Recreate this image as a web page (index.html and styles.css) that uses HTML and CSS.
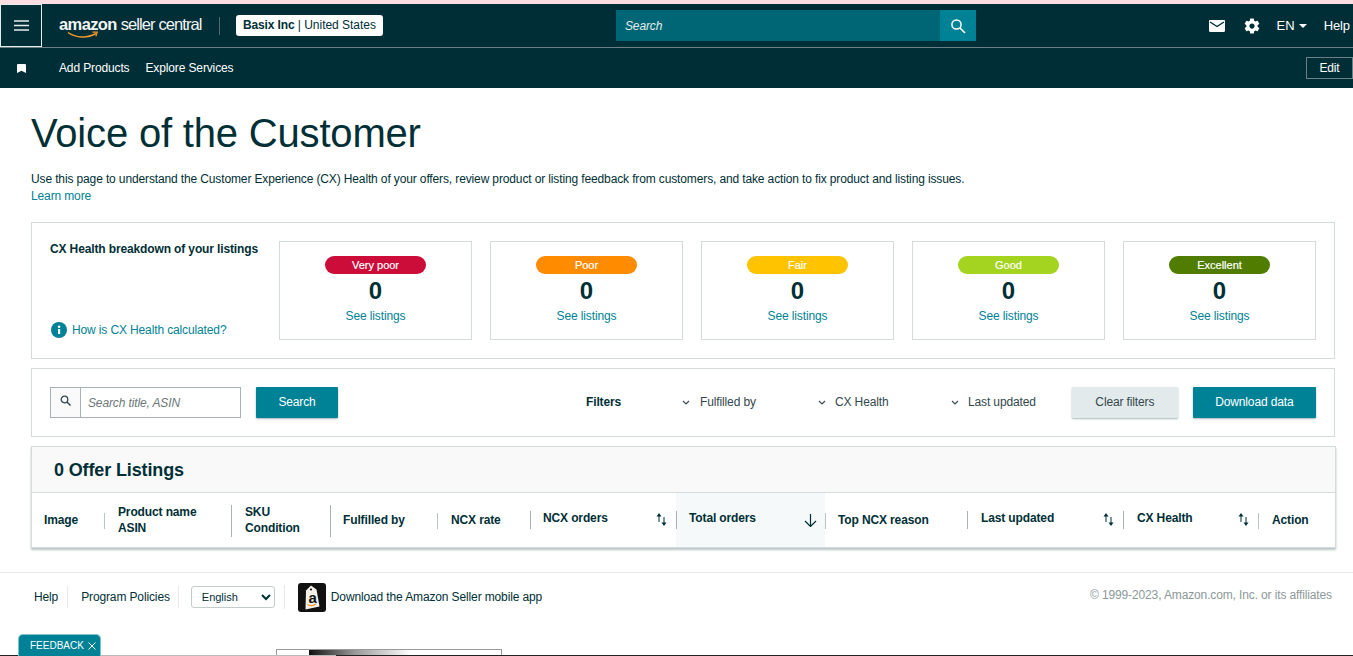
FILE: index.html
```html
<!DOCTYPE html>
<html lang="en">
<head>
<meta charset="utf-8">
<title>Voice of the Customer</title>
<link rel="stylesheet" href="styles.css">
</head>
<body>
<div class="strip"></div>
<header class="nav">
  <div class="nav-top">
    <button class="burger" aria-label="Menu">
      <svg width="15" height="11" viewBox="0 0 15 11"><path d="M0 1h15M0 5.500h15M0 10h15" stroke="#e8eeee" stroke-width="1.600" fill="none"/></svg>
    </button>
    <div class="logo">
      <span class="logo-words"><b>amazon</b> <span class="logo-light">seller central</span></span>
      <svg class="smile" width="32" height="8" viewBox="0 0 32 8"><path d="M1 1.500C9 7 20 7.500 29 2.500" stroke="#f3982a" stroke-width="1.500" fill="none"/><path d="M25.500 1.200l4.800 0-1.400 4" stroke="#f3982a" stroke-width="1.200" fill="none"/></svg>
    </div>
    <span class="logo-sep"></span>
    <div class="account"><b>Basix Inc</b> | United States</div>
    <div class="nav-search">
      <span class="nav-search-text">Search</span>
      <span class="nav-search-btn">
        <svg width="16" height="16" viewBox="0 0 16 16"><circle cx="6.500" cy="6.500" r="4.600" stroke="#fff" stroke-width="1.500" fill="none"/><path d="M10 10l5 5" stroke="#fff" stroke-width="1.700"/></svg>
      </span>
    </div>
    <div class="nav-right">
      <svg class="mail" width="16" height="12" viewBox="0 0 16 12"><path d="M1.200 0h13.600c.7 0 1.200.5 1.200 1.200v9.600c0 .7-.5 1.200-1.200 1.200H1.200C.5 12 0 11.500 0 10.800V1.200C0 .5.500 0 1.200 0z" fill="#fff"/><path d="M1 2l7 4.500L15 2" stroke="#002e36" stroke-width="1.400" fill="none"/></svg>
      <svg class="gear" width="18" height="18" viewBox="0 0 24 24"><path fill="#fff" d="M19.400 13c.04-.33.100-.66.100-1s-.06-.67-.1-1l2.100-1.650c.2-.15.240-.42.120-.64l-2-3.460c-.12-.22-.39-.3-.61-.22l-2.490 1c-.52-.4-1.080-.73-1.690-.98l-.38-2.650A.49.490 0 0 0 14 2h-4c-.25 0-.46.180-.49.420l-.38 2.650c-.61.250-1.170.59-1.690.98l-2.490-1c-.23-.09-.49 0-.61.220l-2 3.460c-.13.220-.07.490.120.640L4.570 11c-.4.330-.7.670-.07 1s.03.670.07 1l-2.110 1.650c-.19.150-.25.420-.12.640l2 3.460c.12.220.39.300.61.220l2.490-1c.52.400 1.080.730 1.690.980l.38 2.650c.03.240.24.420.49.420h4c.25 0 .46-.18.490-.42l.38-2.650c.61-.25 1.170-.59 1.690-.98l2.490 1c.23.090.49 0 .61-.22l2-3.460c.12-.22.070-.49-.12-.64L19.400 13zM12 15.500c-1.930 0-3.500-1.570-3.500-3.500s1.570-3.500 3.500-3.500 3.500 1.570 3.500 3.500-1.570 3.500-3.500 3.500z"/></svg>
      <span class="lang">EN<i class="caret"></i></span>
      <span class="nav-help">Help</span>
    </div>
  </div>
  <div class="nav-bottom">
    <svg class="bookmark" width="9" height="9" viewBox="0 0 9 9"><path d="M0 1a1 1 0 0 1 1-1h7a1 1 0 0 1 1 1v8L4.500 6.800 0 9z" fill="#fff"/></svg>
    <a class="nav-link">Add Products</a>
    <a class="nav-link">Explore Services</a>
    <button class="edit">Edit</button>
  </div>
</header>

<main class="main">
  <h1 class="title">Voice of the Customer</h1>
  <p class="intro">Use this page to understand the Customer Experience (CX) Health of your offers, review product or listing feedback from customers, and take action to fix product and listing issues.</p>
  <a class="learn">Learn more</a>

  <section class="panel health">
    <div class="health-info">
      <div class="health-title">CX Health breakdown of your listings</div>
      <div class="calc">
        <svg width="16" height="16" viewBox="0 0 16 16"><circle cx="8" cy="8" r="8" fill="#008296"/><rect x="7" y="7" width="2.200" height="5" fill="#fff"/><circle cx="8.100" cy="4.700" r="1.300" fill="#fff"/></svg>
        <a>How is CX Health calculated?</a>
      </div>
    </div>
    <div class="health-cards">
      <div class="card"><span class="pill very-poor">Very poor</span><span class="count">0</span><a class="see">See listings</a></div>
      <div class="card"><span class="pill poor">Poor</span><span class="count">0</span><a class="see">See listings</a></div>
      <div class="card"><span class="pill fair">Fair</span><span class="count">0</span><a class="see">See listings</a></div>
      <div class="card"><span class="pill good">Good</span><span class="count">0</span><a class="see">See listings</a></div>
      <div class="card"><span class="pill excellent">Excellent</span><span class="count">0</span><a class="see">See listings</a></div>
    </div>
  </section>

  <section class="panel toolbar">
    <div class="search-box">
      <span class="search-icon"><svg width="11" height="11" viewBox="0 0 11 11"><circle cx="4.500" cy="4.500" r="3.300" stroke="#33484d" stroke-width="1.300" fill="none"/><path d="M7 7l3.500 3.500" stroke="#33484d" stroke-width="1.500"/></svg></span>
      <span class="search-ph">Search title, ASIN</span>
    </div>
    <button class="btn primary search-btn">Search</button>
    <span class="filters-label">Filters</span>
    <span class="filter f1"><svg class="chev" width="8" height="5" viewBox="0 0 8 5"><path d="M1 1l3 3 3-3" stroke="#33484d" stroke-width="1.100" fill="none"/></svg>Fulfilled by</span>
    <span class="filter f2"><svg class="chev" width="8" height="5" viewBox="0 0 8 5"><path d="M1 1l3 3 3-3" stroke="#33484d" stroke-width="1.100" fill="none"/></svg>CX Health</span>
    <span class="filter f3"><svg class="chev" width="8" height="5" viewBox="0 0 8 5"><path d="M1 1l3 3 3-3" stroke="#33484d" stroke-width="1.100" fill="none"/></svg>Last updated</span>
    <button class="btn secondary">Clear filters</button>
    <button class="btn primary download">Download data</button>
  </section>

  <section class="listings">
    <h2 class="listings-head">0 Offer Listings</h2>
    <div class="thead">
      <div class="th c-image"><span>Image</span></div>
      <div class="th c-name sep"><span>Product name<br>ASIN</span></div>
      <div class="th c-sku sep tall"><span>SKU<br>Condition</span></div>
      <div class="th c-ful sep tall"><span>Fulfilled by</span></div>
      <div class="th c-rate sep"><span>NCX rate</span></div>
      <div class="th c-orders sep raised"><span>NCX orders</span><svg class="sort" width="11" height="13" viewBox="0 0 11 13"><path d="M3 0L.5 3.500h5zM8 13l-2.500-3.500h5z" fill="#002f36"/><path d="M3 3v6M8 4v6" stroke="#002f36" stroke-width="1"/></svg></div>
      <div class="th c-total sep raised active"><span>Total orders</span><svg class="down" width="13" height="13" viewBox="0 0 13 13"><path d="M6.500 0v12M1 7l5.500 5.500L12 7" stroke="#002f36" stroke-width="1.200" fill="none"/></svg></div>
      <div class="th c-top sep"><span>Top NCX reason</span></div>
      <div class="th c-last sep raised"><span>Last updated</span><svg class="sort" width="11" height="13" viewBox="0 0 11 13"><path d="M3 0L.5 3.500h5zM8 13l-2.500-3.500h5z" fill="#002f36"/><path d="M3 3v6M8 4v6" stroke="#002f36" stroke-width="1"/></svg></div>
      <div class="th c-cx sep raised"><span>CX Health</span><svg class="sort" width="11" height="13" viewBox="0 0 11 13"><path d="M3 0L.5 3.500h5zM8 13l-2.500-3.500h5z" fill="#002f36"/><path d="M3 3v6M8 4v6" stroke="#002f36" stroke-width="1"/></svg></div>
      <div class="th c-action sep"><span>Action</span></div>
    </div>
  </section>
</main>

<footer class="footer">
  <a class="foot-link">Help</a>
  <a class="foot-link">Program Policies</a>
  <div class="foot-select"><select class="lang-select"><option>English</option></select></div>
  <svg class="app-icon" width="28" height="29" viewBox="0 0 28 29"><rect width="28" height="29" rx="3" fill="#111"/><path d="M8 7.500l5-5 5.500 4 3 17-14 3z" fill="#f4f1ea"/><circle cx="13" cy="6.500" r="1.100" fill="#111"/><text x="14.500" y="19.500" text-anchor="middle" class="app-a">a</text><path d="M9.500 21.500c3 1.600 6 1.400 8.500-.4" stroke="#f3982a" stroke-width="1.200" fill="none"/></svg>
  <span class="app-text">Download the Amazon Seller mobile app</span>
  <span class="copyright">© 1999-2023, Amazon.com, Inc. or its affiliates</span>
</footer>

<div class="feedback">FEEDBACK<svg width="8" height="8" viewBox="0 0 8 8"><path d="M.5.500l7 7M7.500.500l-7 7" stroke="#fff" stroke-width="1"/></svg></div>
<div class="taskbar"></div>
<div class="thumb"><span class="thumb-grad"></span></div>
</body>
</html>
```
FILE: styles.css
```css
* { box-sizing: border-box; }
html, body { margin: 0; padding: 0; }
body {
  position: relative;
  height: 656px;
  overflow: hidden;
  background: #fff;
  color: #002f36;
  font-family: "Liberation Sans", Arial, sans-serif;
  font-size: 12px;
  letter-spacing: -0.13px;
}
button { font-family: inherit; letter-spacing: inherit; cursor: pointer; }
.strip { height: 4px; background: #fcdde2; }

.nav { background: #002e36; color: #fff; }
.nav-top { position: relative; height: 44px; display: flex; align-items: center; border-bottom: 1px solid #6a8085; }
.burger { width: 42px; height: 43px; flex: none; background: transparent; border: 1px solid #e6ecec; display: flex; align-items: center; justify-content: center; padding: 0; }
.logo { position: relative; margin-left: 17px; width: 144px; height: 24px; }
.logo-words { display: block; font-size: 16.500px; line-height: 20px; white-space: nowrap; color: #f2f5f5; letter-spacing: -0.75px; }
.logo-words b { font-weight: 700; letter-spacing: -0.6px; }
.logo-light { letter-spacing: -0.9px; }
.smile { position: absolute; left: 8px; top: 17px; }
.logo-sep { width: 1px; height: 18px; background: #55696e; margin-left: 16px; }
.account { margin-left: 16px; width: 147px; height: 21px; padding-left: 7px; background: #fff; color: #002f36; border-radius: 3px; font-size: 12px; line-height: 21px; white-space: nowrap; letter-spacing: -0.03px; }
.account b { letter-spacing: -0.13px; }
.nav-search { position: absolute; left: 616px; top: 6px; width: 360px; height: 31px; background: #006574; display: flex; align-items: center; justify-content: space-between; }
.nav-search-text { margin-left: 9px; font-size: 12px; font-style: italic; color: #e4eeee; }
.nav-search-btn { width: 36px; height: 31px; background: #008296; display: flex; align-items: center; justify-content: center; }
.nav-right { margin-left: auto; display: flex; align-items: center; padding-right: 3px; }
.gear { margin-left: 18px; }
.lang { margin-left: 16px; font-size: 13px; letter-spacing: 0; display: flex; align-items: center; }
.caret { width: 0; height: 0; margin-left: 4px; margin-top: 1px; border: 4px solid transparent; border-top: 4px solid #fff; border-bottom: 0; }
.nav-help { margin-left: 17px; font-size: 13px; letter-spacing: -0.1px; }

.nav-bottom { height: 40px; display: flex; align-items: center; padding-left: 17px; }
.bookmark { margin-right: 33px; }
.nav-link { font-size: 12px; color: #fff; margin-right: 16px; }
.edit { margin-left: auto; width: 47px; height: 22px; background: transparent; border: 1px solid #6a8085; color: #fff; font-size: 12px; padding: 0; }

.main { padding: 0 18px 0 31px; }
.title { margin: 21px 0 0; font-size: 40px; line-height: 48px; font-weight: 400; color: #002f36; letter-spacing: -0.18px; }
.intro { margin: 14px 0 0; font-size: 12px; line-height: 17px; color: #002f36; }
.learn { display: block; font-size: 12px; line-height: 17px; color: #008296; }

.panel { border: 1px solid #d5dbdb; background: #fff; }
.health { margin-top: 17px; width: 1304px; height: 137px; display: flex; padding: 18px; }
.health-info { width: 229px; flex: none; display: flex; flex-direction: column; justify-content: space-between; }
.health-title { font-size: 12px; font-weight: 700; line-height: 16px; color: #002f36; }
.calc { display: flex; align-items: center; gap: 5px; margin: 0 0 2px 1px; color: #008296; font-size: 12px; }
.health-cards { display: flex; gap: 18px; }
.card { width: 193px; height: 99px; border: 1px solid #d5dbdb; display: flex; flex-direction: column; align-items: center; padding-top: 14px; }
.pill { width: 101px; height: 18px; border-radius: 9px; font-size: 11px; letter-spacing: 0; text-align: center; line-height: 18px; color: #fff; -webkit-text-stroke: 0.2px #fff; }
.very-poor { background: #cc0c39; }
.poor { background: #ff8c00; }
.fair { background: #ffc300; }
.good { background: #a4d41f; }
.excellent { background: #507d00; }
.count { font-size: 24px; font-weight: 700; line-height: 28px; margin-top: 3px; color: #002f36; letter-spacing: 0; }
.see { font-size: 12px; line-height: 22px; color: #008296; }

.toolbar { margin-top: 9px; width: 1304px; height: 69px; display: flex; align-items: center; padding: 0 18px; }
.toolbar > * { flex: none; }
.search-box { width: 191px; height: 31px; display: flex; border: 1px solid #a6b2b4; margin-top: -1px; }
.search-icon { width: 30px; background: #fafafa; border-right: 1px solid #a6b2b4; display: flex; align-items: center; justify-content: center; padding-bottom: 3px; }
.search-ph { padding-left: 7px; font-size: 12px; font-style: italic; color: #6c7778; line-height: 30px; }
.btn { height: 31px; border: none; font-size: 12px; padding: 0; border-radius: 1px; box-shadow: 0 1px 2px rgba(0,47,54,.35); margin-top: -1px; }
.primary { background: #008296; color: #fff; }
.secondary { background: #e3eaeb; color: #33484d; width: 106px; margin-left: 36px; }
.search-btn { width: 82px; margin-left: 15px; }
.download { width: 123px; margin-left: 15px; }
.filters-label { margin: -2px 0 0 248px; width: 96px; font-weight: 700; color: #002f36; font-size: 12px; }
.filter { display: inline-flex; align-items: center; gap: 9px; margin-top: -2px; color: #33484d; font-size: 12px; white-space: nowrap; }
.chev { flex: none; margin-top: 1px; }
.f1 { width: 136px; gap: 10px; }
.f2 { width: 133px; }

.listings { margin-top: 9px; width: 1305px; height: 102px; border: 1px solid #d5dbdb; box-shadow: 0 2px 2px rgba(0,47,54,.28); background: #fff; }
.listings-head { margin: 0; height: 46px; background: #f9f9f9; border-bottom: 1px solid #d5dbdb; padding-left: 22px; font-size: 18px; line-height: 46px; font-weight: 700; color: #002f36; }
.thead { display: flex; height: 54px; }
.th { position: relative; display: flex; align-items: center; font-size: 12px; font-weight: 700; color: #002f36; line-height: 16px; white-space: nowrap; padding-left: 14px; padding-bottom: 1px; }
.th.raised { padding-bottom: 4px; padding-left: 13px; }
.sep::before { content: ""; position: absolute; left: 0; top: 20px; height: 16px; width: 1px; background: #bcc5c6; }
.tall::before { top: 12px; height: 32px; background: #a6b2b4; }
.raised::before { top: 18px; height: 18px; background: #a6b2b4; }
.sort { position: absolute; right: 9px; top: 20px; }
.down { position: absolute; right: 8px; top: 21px; }
.active { background: #f5f9fa; }
.c-image { width: 72px; padding-left: 12px; }
.c-name { width: 127px; }
.c-sku { width: 99px; }
.c-ful { width: 107px; padding-left: 13px; }
.c-rate { width: 93px; }
.c-orders { width: 146px; }
.c-total { width: 149px; }
.c-top { width: 142px; padding-left: 13px; }
.c-last { width: 156px; }
.c-cx { width: 135px; }
.c-action { width: 76px; }
.th.c-last, .th.c-cx { padding-left: 14px; }

.footer { position: relative; margin-top: 24px; border-top: 1px solid #e7e9e9; height: 60px; display: flex; align-items: center; padding-left: 34px; font-size: 12px; color: #002f36; padding-bottom: 11px; }
.foot-link { padding-right: 9px; margin-right: 13px; line-height: 22px; border-right: 1px solid #e7e9e9; }
.foot-link + .foot-link { padding-right: 8px; margin-right: 12px; }
.foot-select { padding-right: 9px; margin-right: 13px; border-right: 1px solid #e7e9e9; height: 24px; display: flex; align-items: center; }
.lang-select { width: 84px; height: 22px; font-family: inherit; font-size: 11px; background: #fff; color: #002f36; border: 1px solid #c4cbcc; border-radius: 3px; padding-left: 6px; }
.app-icon { flex: none; }
.app-a { font-family: "Liberation Sans", sans-serif; font-size: 15px; font-weight: 700; fill: #111; }
.app-text { margin-left: 5px; }
.copyright { position: absolute; right: 21px; top: 15px; color: #8c9899; font-size: 12px; }

.feedback { position: absolute; left: 18px; top: 634px; width: 83px; height: 22px; background: #008296; border: 1px solid #80c1ca; border-bottom: 0; border-radius: 5px 5px 0 0; color: #fff; font-size: 10px; letter-spacing: 0; display: flex; align-items: center; padding-left: 11px; gap: 4px; z-index: 2; }
.taskbar { position: absolute; left: 0; right: 0; top: 655px; height: 1px; background: linear-gradient(90deg, #222 48px, #bbb 48px, #bbb 336px, #222 336px); }
.thumb { position: absolute; left: 276px; top: 649px; width: 226px; height: 6px; background: #fff; border: 1px solid #9a9a9a; border-bottom: 0; }
.thumb-grad { position: absolute; left: 32px; top: 0; width: 102px; height: 5px; background: linear-gradient(90deg, #111, #999 45%, #fff); }
```
